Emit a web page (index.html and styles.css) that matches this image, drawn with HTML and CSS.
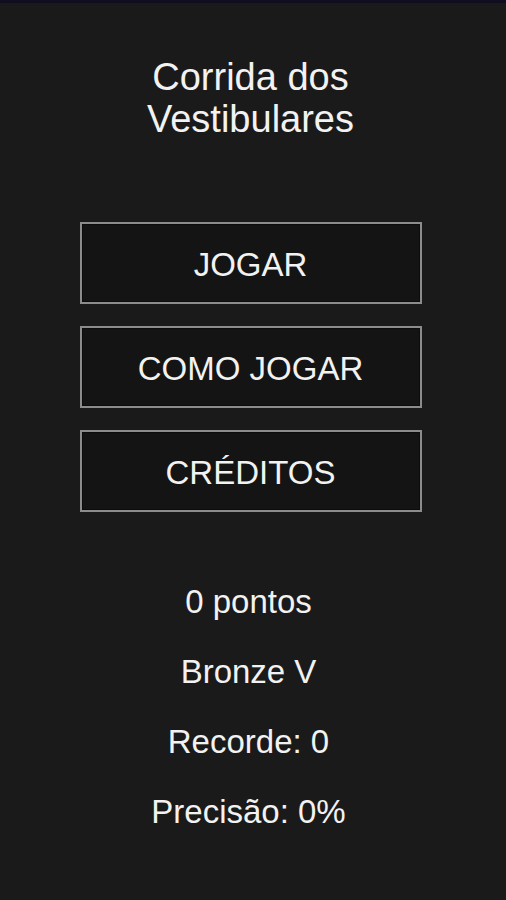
FILE: index.html
```html
<!DOCTYPE html>
<html lang="pt">
<head>
  <meta charset="utf-8" />
  <meta name="viewport" content="width=device-width, initial-scale=1" />
  <title>Corrida dos Vestibulares</title>
  <link rel="stylesheet" href="styles.css">
</head>
<body>
  <div class="topbar"></div>
  <main class="menu">
    <h1 class="title">Corrida dos<br>Vestibulares</h1>
    <nav class="buttons">
      <button class="btn">JOGAR</button>
      <button class="btn">COMO JOGAR</button>
      <button class="btn">CRÉDITOS</button>
    </nav>
    <section class="stats">
      <p>0 pontos</p>
      <p>Bronze V</p>
      <p>Recorde: 0</p>
      <p>Precisão: 0%</p>
    </section>
  </main>
</body>
</html>
```

FILE: styles.css
```css
* {
  box-sizing: border-box;
}

body {
  margin: 0;
  height: 100vh;
  background: #1a1a1a;
  color: #f2f2f2;
  font-family: "Liberation Sans", Arial, sans-serif;
}

.topbar {
  height: 3px;
  background: #0f0d1f;
}

.menu {
  display: flex;
  flex-direction: column;
  align-items: center;
  padding-right: 5px;
}

.title {
  margin: 53px 0 0;
  font-size: 38px;
  font-weight: normal;
  line-height: 42px;
  text-align: center;
}

.buttons {
  display: flex;
  flex-direction: column;
  gap: 22px;
  margin-top: 82px;
}

.btn {
  width: 342px;
  height: 82px;
  padding-top: 4px;
  background: #141414;
  border: 2px solid #8c8c8c;
  box-shadow: inset 0 0 0 1px #0c0c0c;
  color: #f2f2f2;
  font-family: inherit;
  font-size: 33px;
}

.stats {
  margin-top: 71px;
  padding-right: 4px;
  display: flex;
  flex-direction: column;
  gap: 33px;
  text-align: center;
}

.stats p {
  margin: 0;
  font-size: 33px;
  line-height: 37px;
}
```
